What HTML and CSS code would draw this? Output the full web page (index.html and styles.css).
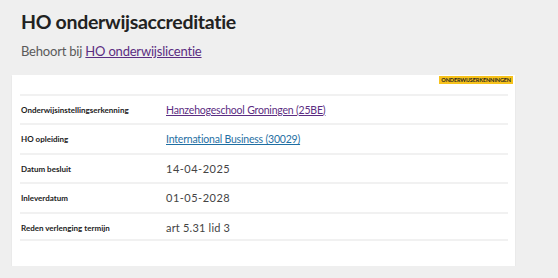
FILE: index.html
```html
<!DOCTYPE html>
<html lang="nl">
  <head>
    <meta charset="UTF-8" />
    <title>HO onderwijsaccreditatie</title>
    <link rel="stylesheet" href="styles.css">
  </head>
  <body>
    <header class="page-head">
      <h1>HO onderwijsaccreditatie</h1>
      <p class="subtitle">Behoort bij <a href="#" class="link-visited">HO onderwijslicentie</a></p>
    </header>

    <section class="card">
      <span class="badge">ONDERWIJSERKENNINGEN</span>
      <dl class="details">
        <div class="row">
          <dt>Onderwijsinstellingserkenning</dt>
          <dd><a href="#" class="link-visited">Hanzehogeschool Groningen (25BE)</a></dd>
        </div>
        <div class="row">
          <dt>HO opleiding</dt>
          <dd><a href="#" class="link">International Business (30029)</a></dd>
        </div>
        <div class="row">
          <dt>Datum besluit</dt>
          <dd class="plain date">14-04-2025</dd>
        </div>
        <div class="row">
          <dt>Inleverdatum</dt>
          <dd class="plain date">01-05-2028</dd>
        </div>
        <div class="row">
          <dt>Reden verlenging termijn</dt>
          <dd class="plain">art 5.31 lid 3</dd>
        </div>
      </dl>
    </section>
  </body>
</html>
```

FILE: styles.css
```css
* {
  box-sizing: border-box;
  margin: 0;
  padding: 0;
}

body {
  font-family: Lato, "Noto Sans", sans-serif;
  background-color: #efefef;
  color: #333;
  padding: 10px 43px 0 12px;
}

.page-head {
  padding-left: 9px;
  height: 65px;
}

h1 {
  font-size: 19.5px;
  font-weight: 700;
  line-height: 24px;
  letter-spacing: -0.3px;
  color: #222;
}

.subtitle {
  margin-top: 8px;
  font-size: 13px;
  line-height: 18px;
  letter-spacing: -0.2px;
  color: #5a5a5a;
}

.link-visited {
  color: #5b2d82;
}

.link {
  color: #1f6fa3;
}

.card {
  position: relative;
  background: #fff;
  height: 191px;
  padding: 19px 7px 0 8px;
  box-shadow: 0 1px 1px rgba(0, 0, 0, 0.12);
}

.badge {
  position: absolute;
  top: 1px;
  right: 2px;
  background: #f7c21b;
  color: #222;
  font-size: 5.5px;
  font-weight: 700;
  line-height: 8px;
  letter-spacing: -0.1px;
  padding: 0 2px;
}

.row {
  display: grid;
  grid-template-columns: 145px 1fr;
  height: 29.4px;
  border-top: 2px solid #f1f1f1;
  padding: 0 0 0 1px;
}

.row:last-child {
  border-bottom: 2px solid #f1f1f1;
}

dt {
  font-size: 8px;
  font-weight: 700;
  color: #222;
  padding-top: 9px;
}

dd {
  font-size: 10.5px;
  letter-spacing: -0.2px;
  padding-top: 8px;
  color: #444;
}

dd.plain {
  font-size: 11px;
  letter-spacing: 0.2px;
  padding-top: 7px;
}

dd.date {
  letter-spacing: 0.5px;
}
```
